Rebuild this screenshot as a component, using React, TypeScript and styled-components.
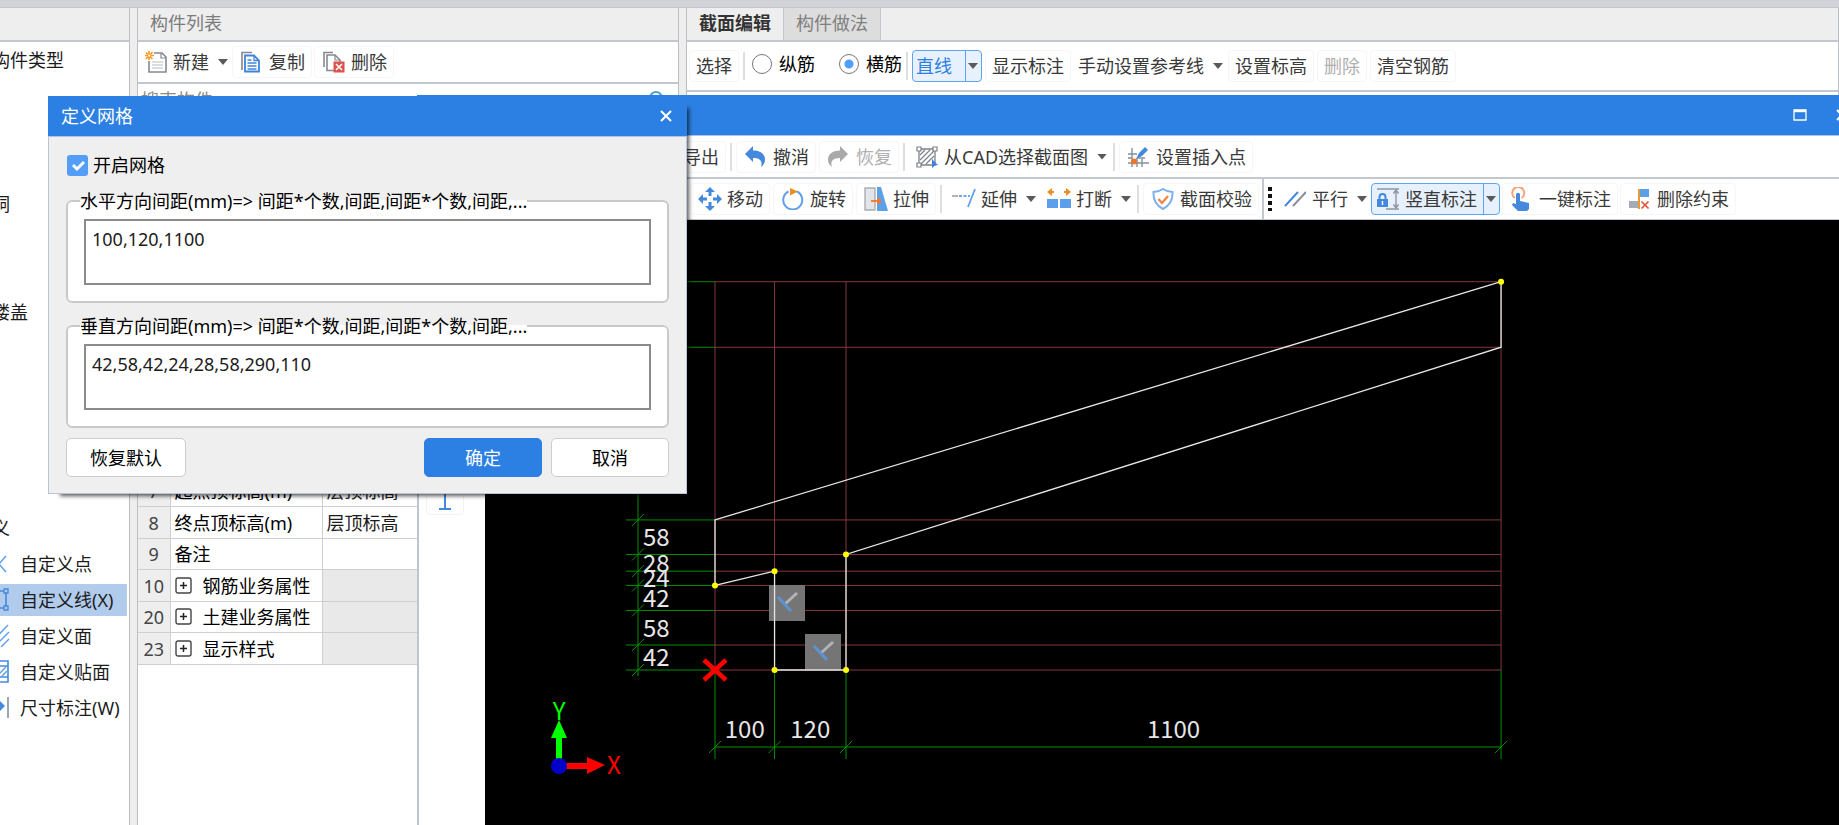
import React from 'react';
import styled, { createGlobalStyle, css } from 'styled-components';

const blue = '#2d80e3';
const line = '#c3c8ce';

const GlobalStyle = createGlobalStyle`
  *, *::before, *::after { box-sizing: border-box; }
  html, body { margin: 0; padding: 0; }
  body, button, input, textarea {
    font-family: 'Noto Sans', 'Noto Sans CJK SC', sans-serif;
    font-size: 18px;
    line-height: 24px;
    color: #1c1c1c;
  }
  button { margin: 0; padding: 0; background: none; border: 0; white-space: nowrap; }
`;

/* ---------- main window ---------- */

const Desktop = styled.div`
  position: relative;
  min-height: 100vh;
  display: flex;
  flex-direction: column;
  overflow: hidden;
  background: #eeeeee;
`;

const TopStrip = styled.div`
  height: 8px;
  background: #d1d3d9;
  border-bottom: 1px solid ${line};
`;

const Columns = styled.div`
  flex: 1;
  display: flex;
  gap: 7px;
  min-height: 0;
`;

const Panel = styled.section<{ $width?: number }>`
  flex: ${p => (p.$width ? `0 0 ${p.$width}px` : '1 1 0')};
  display: flex;
  flex-direction: column;
  min-width: 0;
  overflow: hidden;
  background: #fff;
  border-right: 1px solid #bbbfc4;
  border-left: 1px solid #bbbfc4;
  &:first-child { border-left: 0; }
`;

const PanelHeader = styled.header`
  flex: none;
  display: flex;
  height: 34px;
  background: #eeeeee;
  border-bottom: 2px solid ${line};
`;

const PanelTitle = styled.h2`
  margin: 0;
  padding: 3px 12px;
  font-size: 18px;
  font-weight: 400;
  color: #7c7c7c;
`;

const Tab = styled.button<{ $active?: boolean }>`
  padding: 0 12px 2px;
  border-right: 1px solid ${line};
  background: ${p => (p.$active ? '#eeeeee' : '#dddddd')};
  color: ${p => (p.$active ? '#333' : '#808080')};
  font-weight: ${p => (p.$active ? 700 : 400)};
`;

/* ---------- component tree ---------- */

const Tree = styled.ul`
  list-style: none;
  margin: 0 2px 0 -44px;
  padding: 0;
  display: grid;
  grid-auto-rows: 36px;
`;

const TreeRow = styled.li<{ $row: number }>`
  grid-row: ${p => p.$row};
  display: flex;
  align-items: center;
  white-space: nowrap;
`;

const TreeItem = styled.button<{ $selected?: boolean }>`
  flex: 1;
  height: 32px;
  display: flex;
  align-items: center;
  gap: 10px;
  padding-left: 28px;
  background: ${p => (p.$selected ? '#b1cbed' : 'transparent')};
`;

/* ---------- toolbars ---------- */

const Toolbar = styled.div<{ $height: number; $gap?: number }>`
  flex: none;
  display: flex;
  align-items: center;
  gap: ${p => p.$gap ?? 3}px;
  height: ${p => p.$height}px;
  background: #fff;
  border-bottom: 2px solid ${line};
`;

const RebarBar = styled(Toolbar)`
  padding-left: 2px;
`;

const ToolButton = styled.button<{ $icon?: boolean; $drop?: boolean }>`
  flex: none;
  display: flex;
  align-items: center;
  gap: 6px;
  height: 32px;
  padding: 0 6px;
  border: 1px solid ${p => (p.$drop ? 'transparent' : '#f6f6f6')};
  border-radius: 4px;
  color: #3a3a3a;
  ${p => p.$icon && !p.$drop && css`padding-left: 8px;`}
  ${p => p.$drop && css`padding-right: 1px;`}
  ${p => p.$drop && !p.$icon && css`padding-left: 3px;`}
  svg[width='24'] { margin: 0 -1px; }
  &:disabled { color: #b0b0b0; }
`;

const Arrow = styled.span`
  width: 10px;
  height: 6px;
  margin-left: 3px;
  background: #5a5a5a;
  clip-path: polygon(0 0, 100% 0, 50% 100%);
`;

const Separator = styled.span`
  flex: none;
  width: 2px;
  height: 28px;
  margin: 0 1px;
  background: #dedede;
`;

const SplitButton = styled.div`
  flex: none;
  display: flex;
  height: 32px;
  border: 1px solid #5ea4f0;
  border-radius: 4px;
  background: #e7f1fd;
`;

const SplitMain = styled.button<{ $accent?: boolean }>`
  display: flex;
  align-items: center;
  gap: 6px;
  padding: ${p => (p.$accent ? '0 13px 0 3px' : '0 6px 0 5px')};
  color: ${p => (p.$accent ? blue : '#3a3a3a')};
`;

const SplitArrow = styled.button`
  display: flex;
  align-items: center;
  width: 16px;
  border-left: 1px solid #5ea4f0;
  ${Arrow} { margin-left: 2px; }
`;

const RadioLabel = styled.label`
  flex: none;
  display: flex;
  align-items: center;
  gap: 7px;
  padding: 0 18px 5px 3px;
  color: #000;
  &:last-of-type { padding-right: 0; }
`;

const Radio = styled.input`
  appearance: none;
  width: 20px;
  height: 20px;
  margin: 0;
  border: 1px solid #777;
  border-radius: 50%;
  background: #fff;
  &:checked { background: radial-gradient(circle, #4f9ffb 4px, #fff 5px); }
`;

const Grip = styled.span`
  width: 4px;
  height: 24px;
  margin: 0 3px 0 4px;
  background: repeating-linear-gradient(#111 0 4px, transparent 4px 7px);
`;

/* ---------- component list ---------- */

const SearchBox = styled.label`
  flex: none;
  display: flex;
  align-items: center;
  height: 32px;
  padding: 0 12px 0 3px;
`;

const SearchInput = styled.input`
  flex: 1;
  min-width: 0;
  padding: 0;
  border: 0;
  outline: 0;
  &::placeholder { color: #8a8a8a; opacity: 1; }
`;

const ListArea = styled.div`
  flex: none;
  height: 359px;
`;

const PropertyTable = styled.table`
  width: 100%;
  table-layout: fixed;
  border-collapse: collapse;
  td, th {
    height: 32px;
    padding: 0 4px;
    border: 1px solid #cfcfcf;
    font-weight: 400;
    text-align: left;
    white-space: nowrap;
  }
  tr:nth-child(odd) > * { height: 31px; }
`;

const RowNumber = styled.th`
  && {
    width: 32px;
    padding: 0;
    border-left: 0;
    text-align: center;
    background: #eeeeee;
    color: #444;
  }
`;

const NameCell = styled.td`
  width: 152px;
  color: #000;
`;

const ValueCell = styled.td<{ $group?: boolean }>`
  background: ${p => (p.$group ? '#e9e9e9' : '#fff')};
`;

const GroupName = styled.span`
  display: flex;
  align-items: center;
  gap: 10px;
`;

const Expander = styled.button`
  display: flex;
`;

/* ---------- drawing window ---------- */

const DrawingWindow = styled.section`
  position: absolute;
  left: 417px;
  right: -24px;
  top: 95px;
  bottom: 0;
  display: flex;
  flex-direction: column;
  background: #fff;
  border-left: 2px solid #bcc5d3;
`;

const TitleBar = styled.header`
  flex: none;
  display: flex;
  align-items: center;
  height: 41px;
  background: ${blue};
  color: #fff;
  border-bottom: 1px solid #a9c4e6;
`;

const WindowTitleBar = styled(TitleBar)`
  justify-content: flex-end;
  margin-left: -2px;
`;

const CaptionButton = styled.button`
  display: flex;
  align-items: center;
  justify-content: center;
  width: 42px;
  height: 36px;
`;

const FileBar = styled(Toolbar)`
  padding-left: 257px;
`;

const EditBar = styled(Toolbar)`
  align-items: stretch;
  gap: 0;
  padding-left: 271px;
  border-bottom-width: 1px;
`;

const ToolGroup = styled.div<{ $gap?: number }>`
  display: flex;
  align-items: center;
  gap: ${p => p.$gap ?? 3}px;
  padding-right: 3px;
  & + & {
    border-left: 2px solid ${line};
  }
`;

const Work = styled.div`
  flex: 1;
  display: flex;
  min-height: 0;
`;

const SideBar = styled.nav`
  flex: 0 0 66px;
  padding: 259px 0 0 7px;
`;

const SideButton = styled.button`
  display: flex;
  align-items: flex-end;
  justify-content: center;
  width: 38px;
  height: 36px;
  padding-bottom: 4px;
  border: 1px solid #f3f3f3;
  border-radius: 4px;
`;

const Canvas = styled.svg`
  display: block;
  flex: 1;
  min-width: 0;
  height: 100%;
  background: #000;
  font-family: 'Noto Sans CJK SC', sans-serif;
  font-size: 24px;
`;

/* ---------- grid dialog ---------- */

const Dialog = styled.form`
  position: absolute;
  left: 48px;
  top: 96px;
  width: 639px;
  background: #efefef;
  box-shadow: 7px 7px 4px -5px rgba(0, 0, 0, 0.65);
`;

const DialogTitleBar = styled(TitleBar)`
  justify-content: space-between;
  padding-left: 13px;
`;

const DialogTitle = styled.h1`
  margin: 0;
  font-size: 18px;
  font-weight: 400;
`;

const DialogBody = styled.div`
  display: flex;
  flex-direction: column;
  padding: 16px 17px;
  border: 1px solid #b9c4d6;
  border-top: 0;
`;

const CheckLabel = styled.label`
  display: flex;
  align-items: center;
  gap: 5px;
  padding-left: 1px;
  color: #000;
`;

const CheckMark = styled.span`
  display: grid;
  width: 21px;
  height: 21px;
  > * { grid-area: 1 / 1; }
  svg { pointer-events: none; }
`;

const CheckBox = styled.input`
  appearance: none;
  width: 21px;
  height: 21px;
  margin: 0;
  border-radius: 3px;
  background: #549efa;
`;

const SpacingField = styled.fieldset`
  margin: 12px 0 0;
  padding: 6px 16px 16px;
  border: 2px solid #c9c9c9;
  border-radius: 6px;
  background: #fff;
  & + & { margin-top: 11px; }
`;

const Legend = styled.legend`
  margin-left: -4px;
  padding: 0;
  color: #000;
`;

const SpacingInput = styled.textarea`
  display: block;
  width: 100%;
  height: 66px;
  padding: 6px;
  border: 2px solid #8b8b8b;
  border-radius: 0;
  resize: none;
  outline: 0;
  background: #fff;
`;

const DialogActions = styled.div`
  display: flex;
  gap: 9px;
  margin-top: 10px;
`;

const ActionButton = styled.button<{ $primary?: boolean; $first?: boolean }>`
  width: 118px;
  height: 39px;
  border-radius: 5px;
  border: 1px solid ${p => (p.$primary ? blue : '#cdcdcd')};
  background: ${p => (p.$primary ? blue : '#fff')};
  color: ${p => (p.$primary ? '#fff' : '#000')};
  ${p => p.$first && css`
    width: 120px;
    margin-right: auto;
  `}
`;

/* ---------- icons ---------- */

const Icon = ({ children, size = 22 }: { children: React.ReactNode; size?: number }) => (
  <svg width={size} height={size} viewBox={`0 0 ${size} ${size}`} fill="none" aria-hidden="true">{children}</svg>
);

const NewIcon = () => (
  <Icon>
    <path d="M9 2h8l4 4v15H4V10" stroke="#85898f" strokeWidth="1.6" />
    <path d="M16 2v5h5" stroke="#85898f" strokeWidth="1.2" />
    <path d="M7 11h11M7 14h11M7 17h11" stroke="#cfd2d6" strokeWidth="1.4" />
    <path d="M4 0v9M0 4.500h9M1 1.500l6.500 6.500M7.500 1L1 8" stroke="#f79a2a" strokeWidth="1.600" />
    <circle cx="4.200" cy="4.500" r="1.300" fill="#fff3b0" />
  </Icon>
);
const CopyIcon = () => (
  <Icon>
    <path d="M1 19V1.500h10" stroke="#85898f" strokeWidth="1.600" />
    <path d="M4 4.500h9l5 5v11H4z" fill="#fff" stroke="#3f84d8" strokeWidth="1.800" />
    <path d="M13 4.500v5h5" stroke="#3f84d8" strokeWidth="1.300" />
    <path d="M6.500 9h4M6.500 12h9M6.500 15h9M6.500 18h9" stroke="#3f84d8" strokeWidth="1.300" />
  </Icon>
);
const DeleteIcon = () => (
  <Icon>
    <path d="M1 16V1.500h9" stroke="#85898f" strokeWidth="1.600" />
    <path d="M11 19.500H4V4h8l5 5v2" stroke="#85898f" strokeWidth="1.600" />
    <path d="M12 4v5h5" stroke="#85898f" strokeWidth="1.200" />
    <rect x="10.500" y="10.500" width="11" height="11" fill="#d9534f" />
    <path d="M13 13l6 6M19 13l-6 6" stroke="#fff" strokeWidth="1.500" />
  </Icon>
);
const UndoIcon = () => (
  <Icon>
    <path d="M0 8L8 0v4.500c8 0 12 4 12 9 0 3-1 5-4 7.500 2-6-1-9-8-9v4z" fill="#4489dc" />
  </Icon>
);
const RedoIcon = () => (
  <Icon>
    <path d="M20 8L12 0v4.500c-8 0-12 4-12 9 0 3 1 5 4 7.500-2-6 1-9 8-9v4z" fill="#a9a9a9" />
  </Icon>
);
const HatchIcon = () => (
  <Icon>
    <path d="M3 3h16v16H3z" stroke="#7b8288" strokeWidth="1.300" />
    <path d="M4 9l5-5M4 14L14 4M5 18L18 5M10 18l8-8" stroke="#7b8288" strokeWidth="1.200" />
    <path d="M1 1h4v4H1zM17 1h4v4h-4zM1 17h4v4H1z" fill="#fff" stroke="#7b8288" strokeWidth="1.200" />
    <path d="M16 13l6 6-3 .500-3 2.500z" fill="#3f84d8" />
  </Icon>
);
const InsertIcon = () => (
  <Icon>
    <path d="M4 2v19M0 8h9M0 17h21M9 12v9M14 13v8M10 12h7M0 12h4" stroke="#84909a" strokeWidth="1.400" />
    <path d="M8 13l3-6 6-6 3 3-6 6z" fill="#4489dc" />
    <circle cx="6" cy="15.500" r="3" fill="#f0762b" />
  </Icon>
);
const MoveIcon = () => (
  <Icon size={24}>
    <path d="M12 0l5 5h-3.500v4h-3V5H7zM12 24l5-5h-3.500v-4h-3v4H7zM0 12l5-5v3.500h4v3H5V17zM24 12l-5-5v3.500h-4v3h4V17z" fill="#4489dc" />
  </Icon>
);
const RotateIcon = () => (
  <Icon>
    <path d="M6.500 3.500a9.500 9.500 0 1 0 8.500 0" stroke="#62a0ea" strokeWidth="2" />
    <path d="M8 0l8 3.500-8 4z" fill="#ee8d22" />
  </Icon>
);
const StretchIcon = () => (
  <Icon size={24}>
    <path d="M1 1h10v22H1z" fill="#e3e5ea" stroke="#a9adb3" strokeWidth="1.400" />
    <path d="M13 0h4l7 24H13z" fill="#5c9fea" />
    <path d="M7 14h7" stroke="#f0762b" strokeWidth="1.800" />
    <path d="M13 10l5 4-5 4z" fill="#f0762b" />
  </Icon>
);
const ExtendIcon = () => (
  <Icon size={24}>
    <path d="M0 9h6" stroke="#9ba1a8" strokeWidth="1.600" />
    <path d="M7 9h11" stroke="#4489dc" strokeWidth="1.600" strokeDasharray="3 1.500" />
    <path d="M23 2l-7 18" stroke="#62a0ea" strokeWidth="1.800" />
  </Icon>
);
const BreakIcon = () => (
  <Icon size={24}>
    <path d="M0 12h11v9H0zM13 12h11v9H13z" fill="#5c9fea" />
    <path d="M2 5h5M17 5h5" stroke="#ee8d22" strokeWidth="2" />
    <path d="M5 1v8L0 5zM19 1v8l5-4z" fill="#ee8d22" />
  </Icon>
);
const ShieldIcon = () => (
  <Icon>
    <path d="M11 1c3 2 6 3 9.500 3 .5 8-2 13-9.500 17C3.500 17 1 12 1.500 4 5 4 8 3 11 1z" stroke="#7db1ec" strokeWidth="2" />
    <path d="M6.500 11l3.500 4 6-7" stroke="#f58142" strokeWidth="2.200" />
  </Icon>
);
const ParallelIcon = () => (
  <Icon>
    <path d="M1 18L14 4" stroke="#4489dc" strokeWidth="2" />
    <path d="M9 18L22 4" stroke="#84909a" strokeWidth="2" />
  </Icon>
);
const LockDimIcon = () => (
  <Icon>
    <path d="M0 1h22M9 21h13" stroke="#9096a0" strokeWidth="1.600" />
    <path d="M19 2v18M16.500 5.500L19 2l2.500 3.500M16.500 16.500L19 20l2.500-3.500" stroke="#9096a0" strokeWidth="1.400" />
    <path d="M2.500 11V9a3 3 0 0 1 6 0v2" stroke="#4489dc" strokeWidth="2" />
    <path d="M0 11h11v8H0z" fill="#4489dc" />
    <path d="M5.500 13v4" stroke="#fff" strokeWidth="1.400" />
  </Icon>
);
const TouchIcon = () => (
  <Icon size={24}>
    <path d="M5 11a6 6 0 1 1 6.500 0" stroke="#f7a47c" strokeWidth="2" />
    <path d="M6 7q2-2.500 4 0v7l9 2v6l-2 2H8l-6-6 1-2 3 1z" fill="#4489dc" />
  </Icon>
);
const RemoveIcon = () => (
  <Icon>
    <path d="M0 13h9v7H0z" fill="#a5abb4" />
    <path d="M11 1h9v8h-9z" fill="#5c9fea" />
    <path d="M10 1v20" stroke="#e89a34" strokeWidth="2" />
    <path d="M12.500 13.500l7 7M19.500 13.500l-7 7" stroke="#e0533a" strokeWidth="1.700" />
  </Icon>
);

const PointIcon = () => (
  <Icon size={26}><path d="M8 5l14 16M22 5L8 21" stroke="#62a0ea" strokeWidth="1.600" /></Icon>
);
const LineIcon = () => (
  <Icon size={26}>
    <path d="M4 5v16M4 4h17M22 5v16M4 21h17" stroke="#4489dc" strokeWidth="1.600" />
    <path d="M20 2h4v4h-4zM20 19h4v4h-4zM2 2h4v4H2zM2 19h4v4H2z" fill="#b1cbed" stroke="#4489dc" strokeWidth="1.300" />
  </Icon>
);
const FaceIcon = () => (
  <Icon size={26}><path d="M3 24L24 2M10 24L25 9M17 24l8-8M3 16L16 2" stroke="#62a0ea" strokeWidth="1.500" /></Icon>
);
const VeneerIcon = () => (
  <Icon size={26}>
    <path d="M3 2h21v21H3zM3 7h21M3 18h21" stroke="#4489dc" strokeWidth="1.600" />
    <path d="M13 17l9-9M18 17l5-5" stroke="#62a0ea" strokeWidth="1.500" />
  </Icon>
);
const MeasureIcon = () => (
  <Icon size={26}>
    <path d="M24 2v21" stroke="#84909a" strokeWidth="1.600" />
    <path d="M2 11h16" stroke="#4489dc" strokeWidth="2" />
    <path d="M16 6l5 5-5 5z" fill="#4489dc" />
  </Icon>
);
const PlusBox = () => (
  <Icon size={18}>
    <rect x="1" y="1" width="15" height="15" rx="2" stroke="#444" strokeWidth="1.400" />
    <path d="M5 8.500h7M8.500 5v7" stroke="#222" strokeWidth="1.500" />
  </Icon>
);
const SearchIcon = () => (
  <Icon>
    <circle cx="12" cy="9" r="6" stroke="#4aa3cf" strokeWidth="2" />
    <path d="M8 14l-5 6" stroke="#4aa3cf" strokeWidth="2" />
  </Icon>
);
const CloseIcon = () => (
  <Icon size={14}><path d="M2 2l10 10M12 2L2 12" stroke="#fff" strokeWidth="2" /></Icon>
);
const MaximizeIcon = () => (
  <Icon size={14}><path d="M1 2h12v10H1z" stroke="#fff" strokeWidth="1.300" /><path d="M1 3h12" stroke="#fff" strokeWidth="2.400" /></Icon>
);

/* ---------- section drawing ---------- */

const scale = 0.5955;
const originX = 230;
const originY = 450;
const spansX = [100, 120, 1100];
const spansY = [42, 58, 42, 24, 28, 58, 290, 110];
const stops = (spans: number[]) => spans.reduce<number[]>((all, n) => [...all, all[all.length - 1] + n], [0]);
const px = (mm: number) => originX + mm * scale;
const py = (mm: number) => originY - mm * scale;
const gridX = stops(spansX);
const gridY = stops(spansY);
const dimX = 153;
const dimY = 527;
const profile = [[0, 252], [1320, 652], [1320, 542], [220, 194], [220, 0], [100, 0], [100, 166], [0, 142]];
const nodes = [[0, 142], [100, 166], [220, 194], [100, 0], [220, 0], [1320, 652]];
const constraints = [[284, 365], [320, 414]];

const SectionDrawing = () => (
  <Canvas role="img" aria-label="截面图">
    <g stroke="#84383c">
      {gridX.map(x => <path key={x} d={`M${px(x)} ${py(0)}V${py(652)}`} />)}
      {gridY.map(y => <path key={y} d={`M${px(0)} ${py(y)}H${px(1320)}`} />)}
    </g>
    <g stroke="#008f00">
      <path d={`M${dimX} ${originY + 6}V${py(652)}`} />
      <path d={`M${originX} ${dimY}H${px(1320)}`} />
      {gridX.map(x => (
        <path key={x} d={`M${px(x)} ${originY}V539M${px(x) - 6} ${dimY + 6}l12 -12`} />
      ))}
      {gridY.map(y => (
        <path key={y} d={`M141 ${py(y)}H${originX}M${dimX - 6} ${py(y) + 6}l12 -12`} />
      ))}
    </g>
    {constraints.map(([x, y]) => (
      <g key={x}>
        <rect x={x} y={y} width="36" height="36" fill="#757575" />
        <path d={`M${x + 28} ${y + 8}l-12 11`} stroke="#b0b4b8" strokeWidth="3" />
        <path d={`M${x + 9} ${y + 12}l13 14`} stroke="#5b93d3" strokeWidth="3" />
      </g>
    ))}
    <polygon points={profile.map(([x, y]) => `${px(x)},${py(y)}`).join(' ')} fill="none" stroke="#e6e6e6" strokeWidth="1.300" />
    {nodes.map(([x, y]) => <circle key={`${x}-${y}`} cx={px(x)} cy={py(y)} r="3" fill="#ffff00" />)}
    <path d={`M${originX - 11} ${originY - 10}l22 20m0 -20l-22 20`} stroke="#ff0000" strokeWidth="4.500" />
    <g fill="#e6e6e6">
      {spansX.map((n, i) => (
        <text key={n} x={px(gridX[i] + n / 2)} y="518" textAnchor="middle">{n}</text>
      ))}
      {spansY.slice(0, 6).map((n, i) => (
        <text key={i} x="158" y={py(gridY[i] + n / 2) + 9}>{n}</text>
      ))}
    </g>
    <path d="M71 540V518H66L74 500L82 518H77V540Z" fill="#00ff00" />
    <path d="M80 543H102V537L120 545L102 554V549H80Z" fill="#ff0000" />
    <circle cx="74" cy="546" r="8" fill="#0000c8" />
    <text x="74" y="500" textAnchor="middle" fill="#00ff00">Y</text>
    <text x="129" y="554" textAnchor="middle" fill="#ff0000">X</text>
  </Canvas>
);

/* ---------- data ---------- */

const categories = [
  { row: 1, label: '常用构件类型' },
  { row: 5, label: '门窗洞' },
  { row: 8, label: '空心楼盖' },
  { row: 14, label: '自定义' },
];
const customItems = [
  { row: 15, label: '自定义点', icon: <PointIcon /> },
  { row: 16, label: '自定义线(X)', icon: <LineIcon />, selected: true },
  { row: 17, label: '自定义面', icon: <FaceIcon /> },
  { row: 18, label: '自定义贴面', icon: <VeneerIcon /> },
  { row: 19, label: '尺寸标注(W)', icon: <MeasureIcon /> },
];
const properties = [
  { no: 7, name: '起点顶标高(m)', value: '层顶标高' },
  { no: 8, name: '终点顶标高(m)', value: '层顶标高' },
  { no: 9, name: '备注', value: '' },
  { no: 10, name: '钢筋业务属性', group: true },
  { no: 20, name: '土建业务属性', group: true },
  { no: 23, name: '显示样式', group: true },
];

const Tool = ({ icon, label, drop, disabled }: { icon?: React.ReactNode; label: string; drop?: boolean; disabled?: boolean }) => (
  <ToolButton type="button" $icon={!!icon} $drop={drop} disabled={disabled}>
    {icon}{label}{drop && <Arrow />}
  </ToolButton>
);

export default function App() {
  return (
    <>
      <GlobalStyle />
      <Desktop>
        <TopStrip />
        <Columns>
          <Panel $width={130}>
            <PanelHeader />
            <Tree>
              {categories.map(c => <TreeRow key={c.row} $row={c.row}>{c.label}</TreeRow>)}
              {customItems.map(item => (
                <TreeRow key={item.row} $row={item.row}>
                  <TreeItem type="button" $selected={item.selected}>{item.icon}{item.label}</TreeItem>
                </TreeRow>
              ))}
            </Tree>
          </Panel>

          <Panel $width={542}>
            <PanelHeader><PanelTitle>构件列表</PanelTitle></PanelHeader>
            <Toolbar $height={42} $gap={2}>
              <Tool icon={<NewIcon />} label="新建" drop />
              <Tool icon={<CopyIcon />} label="复制" />
              <Tool icon={<DeleteIcon />} label="删除" />
            </Toolbar>
            <SearchBox>
              <SearchInput type="text" placeholder="搜索构件" aria-label="搜索构件" />
              <SearchIcon />
            </SearchBox>
            <ListArea />
            <PropertyTable>
              <tbody>
                {properties.map(p => (
                  <tr key={p.no}>
                    <RowNumber scope="row">{p.no}</RowNumber>
                    <NameCell>
                      {p.group ? (
                        <GroupName>
                          <Expander type="button" aria-label="展开"><PlusBox /></Expander>
                          {p.name}
                        </GroupName>
                      ) : p.name}
                    </NameCell>
                    <ValueCell $group={p.group}>{p.value}</ValueCell>
                  </tr>
                ))}
              </tbody>
            </PropertyTable>
          </Panel>

          <Panel>
            <PanelHeader>
              <Tab type="button" $active>截面编辑</Tab>
              <Tab type="button">构件做法</Tab>
            </PanelHeader>
            <RebarBar $height={50}>
              <Tool label="选择" />
              <Separator />
              <RadioLabel><Radio type="radio" name="bar" />纵筋</RadioLabel>
              <RadioLabel><Radio type="radio" name="bar" defaultChecked />横筋</RadioLabel>
              <Separator />
              <SplitButton>
                <SplitMain type="button" $accent>直线</SplitMain>
                <SplitArrow type="button" aria-label="更多线型"><Arrow /></SplitArrow>
              </SplitButton>
              <Tool label="显示标注" />
              <Tool label="手动设置参考线" drop />
              <Tool label="设置标高" />
              <Tool label="删除" disabled />
              <Tool label="清空钢筋" />
            </RebarBar>
          </Panel>
        </Columns>

        <DrawingWindow>
          <WindowTitleBar>
            <CaptionButton type="button" aria-label="最大化"><MaximizeIcon /></CaptionButton>
            <CaptionButton type="button" aria-label="关闭"><CloseIcon /></CaptionButton>
          </WindowTitleBar>
          <FileBar $height={43}>
            <Tool label="导出" />
            <Separator />
            <Tool icon={<UndoIcon />} label="撤消" />
            <Tool icon={<RedoIcon />} label="恢复" disabled />
            <Separator />
            <Tool icon={<HatchIcon />} label="从CAD选择截面图" drop />
            <Separator />
            <Tool icon={<InsertIcon />} label="设置插入点" />
          </FileBar>
          <EditBar $height={41}>
            <ToolGroup>
              <Tool icon={<MoveIcon />} label="移动" />
              <Tool icon={<RotateIcon />} label="旋转" />
              <Tool icon={<StretchIcon />} label="拉伸" />
              <Separator />
              <Tool icon={<ExtendIcon />} label="延伸" drop />
              <Tool icon={<BreakIcon />} label="打断" drop />
              <Separator />
              <Tool icon={<ShieldIcon />} label="截面校验" />
            </ToolGroup>
            <ToolGroup $gap={2}>
              <Grip />
              <Tool icon={<ParallelIcon />} label="平行" drop />
              <SplitButton>
                <SplitMain type="button"><LockDimIcon />竖直标注</SplitMain>
                <SplitArrow type="button" aria-label="更多标注"><Arrow /></SplitArrow>
              </SplitButton>
              <Tool icon={<TouchIcon />} label="一键标注" />
              <Tool icon={<RemoveIcon />} label="删除约束" />
            </ToolGroup>
          </EditBar>
          <Work>
            <SideBar>
              <SideButton type="button" aria-label="工字形截面">
                <svg width="14" height="30" viewBox="0 0 14 30" aria-hidden="true">
                  <path d="M1 1h12M1 29h12M7 1v28" stroke="#4489dc" strokeWidth="2" />
                </svg>
              </SideButton>
            </SideBar>
            <SectionDrawing />
          </Work>
        </DrawingWindow>

        <Dialog role="dialog" aria-label="定义网格" onSubmit={e => e.preventDefault()}>
          <DialogTitleBar>
            <DialogTitle>定义网格</DialogTitle>
            <CaptionButton type="button" aria-label="关闭"><CloseIcon /></CaptionButton>
          </DialogTitleBar>
          <DialogBody>
            <CheckLabel>
              <CheckMark>
                <CheckBox type="checkbox" defaultChecked />
                <svg width="21" height="21" viewBox="0 0 21 21" fill="none" aria-hidden="true">
                  <path d="M6 10l4 4 7-7" stroke="#fff" strokeWidth="3" />
                </svg>
              </CheckMark>
              开启网格
            </CheckLabel>
            <SpacingField>
              <Legend>水平方向间距(mm)=&gt; 间距*个数,间距,间距*个数,间距,...</Legend>
              <SpacingInput aria-label="水平方向间距" defaultValue="100,120,1100" />
            </SpacingField>
            <SpacingField>
              <Legend>垂直方向间距(mm)=&gt; 间距*个数,间距,间距*个数,间距,...</Legend>
              <SpacingInput aria-label="垂直方向间距" defaultValue="42,58,42,24,28,58,290,110" />
            </SpacingField>
            <DialogActions>
              <ActionButton type="button" $first>恢复默认</ActionButton>
              <ActionButton type="submit" $primary>确定</ActionButton>
              <ActionButton type="button">取消</ActionButton>
            </DialogActions>
          </DialogBody>
        </Dialog>
      </Desktop>
    </>
  );
}
